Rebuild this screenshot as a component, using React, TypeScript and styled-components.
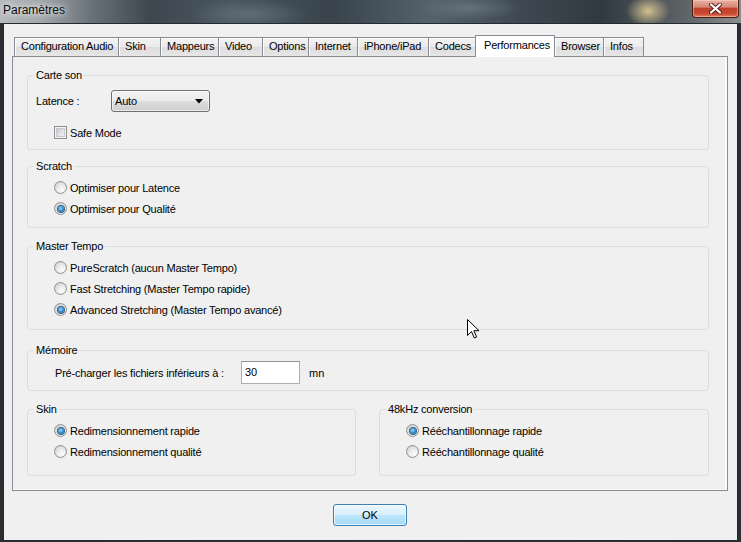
import React from "react";
import styled, { createGlobalStyle, css } from "styled-components";

const GlobalStyle = createGlobalStyle`
	html, body {
		margin: 0;
		padding: 0;
		background: #1f252a;
	}
	body {
		font-family: "Liberation Sans", Arial, sans-serif;
		font-size: 11px;
		color: #000;
	}
`;

const Window = styled.div`
	position: relative;
	width: 741px;
	height: 542px;
	overflow: hidden;
	display: flex;
	flex-direction: column;
	background: linear-gradient(90deg, #2a2e31, #30373d 50%, #2a2f33);
`;

const TitleBar = styled.div`
	height: 23px;
	flex: none;
	display: flex;
	align-items: flex-start;
	padding-left: 3px;
	background:
		radial-gradient(ellipse 22px 16px at 648px 11px, rgba(226, 205, 150, 0.9), rgba(226, 205, 150, 0) 100%),
		radial-gradient(ellipse 60px 14px at 250px 14px, rgba(120, 135, 145, 0.5), rgba(120, 135, 145, 0)),
		radial-gradient(ellipse 50px 12px at 470px 8px, rgba(130, 145, 155, 0.45), rgba(130, 145, 155, 0)),
		linear-gradient(
			90deg,
			#b6babc 0px,
			#a4a9ac 40px,
			#6a737a 90px,
			#3d4750 150px,
			#4a5660 230px,
			#38434c 330px,
			#55616b 430px,
			#3e4953 520px,
			#2f3940 600px,
			#5e6466 685px,
			#8b8e90 741px
		);
`;

const Title = styled.span`
	font-size: 12px;
	line-height: 20px;
	color: #0c0c0c;
	text-shadow: 0 0 5px rgba(255, 255, 255, 0.9), 0 0 9px rgba(255, 255, 255, 0.7);
`;

const CloseButton = styled.div`
	margin-left: auto;
	margin-right: 2px;
	width: 47px;
	height: 18px;
	box-sizing: border-box;
	border: 1px solid #4c1c15;
	border-top: none;
	border-radius: 0 0 4px 4px;
	background: linear-gradient(#e9b0a4 0%, #d68a78 40%, #c0412c 50%, #c9482f 78%, #e27a5c 100%);
	box-shadow: inset 0 0 0 1px rgba(255, 220, 210, 0.45);
	display: flex;
	align-items: center;
	justify-content: center;
`;

const Client = styled.div`
	flex: 1;
	margin: 0 3px 1px 3px;
	border: 1px solid #232a30;
	background: #f0f0f0;
	padding: 11px 9px 0 8px;
	display: flex;
	flex-direction: column;
`;

const TabStrip = styled.div`
	display: flex;
	align-items: flex-end;
	height: 22px;
	padding-left: 2px;
	margin-bottom: -1px;
	position: relative;
	z-index: 1;
`;

const Tab = styled.div<{ $w: number; $active?: boolean }>`
	width: ${(p) => p.$w}px;
	flex: none;
	box-sizing: border-box;
	margin-right: -1px;
	border: 1px solid #898c95;
	border-bottom: none;
	padding-left: 6px;
	white-space: nowrap;
	letter-spacing: -0.2px;
	${(p) =>
		p.$active
			? css`
					height: 22px;
					line-height: 18px;
					padding-left: 8px;
					background: #fff;
					position: relative;
					z-index: 2;
			  `
			: css`
					height: 19px;
					line-height: 17px;
					margin-bottom: 1px;
					background: linear-gradient(#f3f3f3, #ebebeb 50%, #dddddd 51%, #e6e6e6);
					box-shadow: inset 1px 1px 0 #fbfbfb;
			  `}
`;

const Panel = styled.div`
	height: 435px;
	box-sizing: border-box;
	border: 1px solid #898c95;
	background: #f0f0f0;
	box-shadow: inset -2px -1px 0 #fbfbfb;
	padding: 11px 18px 0 14px;
	display: flex;
	flex-direction: column;
`;

const Group = styled.fieldset<{ $h: number; $mt?: number; $pt: number; $w?: number }>`
	margin: ${(p) => p.$mt ?? 0}px 0 0 0;
	padding: ${(p) => p.$pt}px 8px 0 8px;
	height: ${(p) => p.$h}px;
	box-sizing: border-box;
	border: 1px solid #d5dfe5;
	border-radius: 3px;
	min-width: 0;
	${(p) =>
		p.$w
			? css`
					flex: 0 0 ${p.$w}px;
			  `
			: css`
					flex: none;
			  `}
`;

const Legend = styled.legend`
	padding: 0 2px;
	margin-left: -2px;
	line-height: 14px;
	letter-spacing: -0.2px;
`;

const GroupRow = styled.div`
	display: flex;
	gap: 23px;
	margin-top: 11px;
`;

const FieldRow = styled.div<{ $h?: number; $indent?: number }>`
	display: flex;
	align-items: center;
	height: ${(p) => p.$h ?? 22}px;
	padding-left: ${(p) => p.$indent ?? 0}px;
`;

const FieldLabel = styled.span<{ $w: number }>`
	width: ${(p) => p.$w}px;
	flex: none;
	letter-spacing: -0.2px;
	white-space: nowrap;
`;

const Select = styled.div`
	width: 99px;
	height: 22px;
	box-sizing: border-box;
	border: 1px solid #707070;
	border-radius: 3px;
	background: linear-gradient(#f2f2f2, #ebebeb 50%, #dddddd 51%, #cfcfcf);
	box-shadow: inset 0 0 0 1px rgba(255, 255, 255, 0.6);
	display: flex;
	align-items: center;
	justify-content: space-between;
	padding: 0 6px 0 3px;
	letter-spacing: -0.2px;
`;

const OptionRow = styled.label<{ $mt?: number }>`
	display: flex;
	align-items: center;
	gap: 3px;
	height: 21px;
	padding-left: 18px;
	margin-top: ${(p) => p.$mt ?? 0}px;
	letter-spacing: -0.2px;
	white-space: nowrap;
`;

const CheckBox = styled.span`
	width: 13px;
	height: 13px;
	flex: none;
	box-sizing: border-box;
	border: 1px solid #8e8f8f;
	background: linear-gradient(135deg, #b9bdc2, #e6e7e8 60%, #f4f4f4);
	box-shadow: inset 0 0 0 1px #f4f4f4, inset 0 0 0 2px #c6cacf;
`;

const RadioDot = styled.span<{ $on?: boolean }>`
	width: 13px;
	height: 13px;
	flex: none;
	box-sizing: border-box;
	border-radius: 50%;
	border: 1px solid #909193;
	background: radial-gradient(circle at 65% 70%, #fbfbfb 0%, #e9e9e9 45%, #c4c4c4 100%);
	position: relative;
	${(p) =>
		p.$on &&
		css`
			&::after {
				content: "";
				position: absolute;
				left: 2.5px;
				top: 2.5px;
				width: 6px;
				height: 6px;
				border-radius: 50%;
				background: radial-gradient(circle at 45% 40%, #a8dcfa 0%, #3d93d6 45%, #10466f 100%);
				box-shadow: 0 0 0 1px #355e80;
			}
		`}
`;

const TextInput = styled.div`
	width: 59px;
	height: 23px;
	flex: none;
	box-sizing: border-box;
	border: 1px solid #abadb3;
	border-top-color: #8e9197;
	background: #fff;
	padding-left: 3px;
	line-height: 21px;
`;

const Unit = styled.span`
	margin-left: 9px;
`;

const Footer = styled.div`
	display: flex;
	justify-content: center;
	margin-top: 13px;
`;

const OkButton = styled.div`
	width: 74px;
	height: 22px;
	box-sizing: border-box;
	border: 1px solid #3c7fb1;
	border-radius: 3px;
	background: linear-gradient(#eaf6fd, #d9f0fc 50%, #bee6fd 51%, #a7d9f5);
	box-shadow: inset 0 0 0 1px rgba(255, 255, 255, 0.7);
	display: flex;
	align-items: center;
	justify-content: center;
`;

const Pointer = styled.svg`
	position: absolute;
	left: 467px;
	top: 319px;
`;

const tabs = [
	{ label: "Configuration Audio", w: 105 },
	{ label: "Skin", w: 43 },
	{ label: "Mappeurs", w: 59 },
	{ label: "Video", w: 45 },
	{ label: "Options", w: 47 },
	{ label: "Internet", w: 50 },
	{ label: "iPhone/iPad", w: 72 },
	{ label: "Codecs", w: 48 },
	{ label: "Performances", w: 80, active: true },
	{ label: "Browser", w: 50 },
	{ label: "Infos", w: 41 },
];

const Radio = ({ label, on }: { label: string; on?: boolean }) => (
	<OptionRow>
		<RadioDot $on={on} />
		{label}
	</OptionRow>
);

export default function App() {
	return (
		<>
			<GlobalStyle />
			<Window>
				<TitleBar>
					<Title>Paramètres</Title>
					<CloseButton>
						<svg width="13" height="11" viewBox="0 0 13 11">
							<path d="M2 1.5 L11 9.5 M11 1.5 L2 9.5" stroke="#5a1d14" strokeWidth="4" strokeLinecap="round" />
							<path d="M2 1.5 L11 9.5 M11 1.5 L2 9.5" stroke="#fff" strokeWidth="2.2" strokeLinecap="round" />
						</svg>
					</CloseButton>
				</TitleBar>

				<Client>
					<TabStrip>
						{tabs.map((t) => (
							<Tab key={t.label} $w={t.w} $active={t.active}>
								{t.label}
							</Tab>
						))}
					</TabStrip>

					<Panel>
						<Group $h={82} $pt={8}>
							<Legend>Carte son</Legend>
							<FieldRow>
								<FieldLabel $w={75}>Latence :</FieldLabel>
								<Select>
									Auto
									<svg width="8" height="5" viewBox="0 0 8 5">
										<polygon points="0,0 8,0 4,4.5" fill="#000" />
									</svg>
								</Select>
							</FieldRow>
							<OptionRow $mt={10}>
								<CheckBox />
								Safe Mode
							</OptionRow>
						</Group>

						<Group $h={69} $mt={9} $pt={4}>
							<Legend>Scratch</Legend>
							<Radio label="Optimiser pour Latence" />
							<Radio label="Optimiser pour Qualité" on />
						</Group>

						<Group $h={91} $mt={11} $pt={4}>
							<Legend>Master Tempo</Legend>
							<Radio label="PureScratch (aucun Master Tempo)" />
							<Radio label="Fast Stretching (Master Tempo rapide)" />
							<Radio label="Advanced Stretching (Master Tempo avancé)" on />
						</Group>

						<Group $h={48} $mt={13} $pt={4}>
							<Legend>Mémoire</Legend>
							<FieldRow $h={23} $indent={19}>
								<FieldLabel $w={186}>Pré-charger les fichiers inférieurs à :</FieldLabel>
								<TextInput>30</TextInput>
								<Unit>mn</Unit>
							</FieldRow>
						</Group>

						<GroupRow>
							<Group $h={74} $pt={4} $w={329}>
								<Legend>Skin</Legend>
								<Radio label="Redimensionnement rapide" on />
								<Radio label="Redimensionnement qualité" />
							</Group>
							<Group $h={74} $pt={4} $w={330}>
								<Legend>48kHz conversion</Legend>
								<Radio label="Rééchantillonnage rapide" on />
								<Radio label="Rééchantillonnage qualité" />
							</Group>
						</GroupRow>
					</Panel>

					<Footer>
						<OkButton>OK</OkButton>
					</Footer>
				</Client>

				<Pointer width="13" height="21" viewBox="0 0 13 21">
					<path
						d="M0.5 0.5 L0.5 16.5 L4.5 12.5 L7.3 19 L9.6 18 L6.9 11.7 L12 11.7 Z"
						fill="#fff"
						stroke="#000"
						strokeWidth="1"
						strokeLinejoin="miter"
					/>
				</Pointer>
			</Window>
		</>
	);
}
